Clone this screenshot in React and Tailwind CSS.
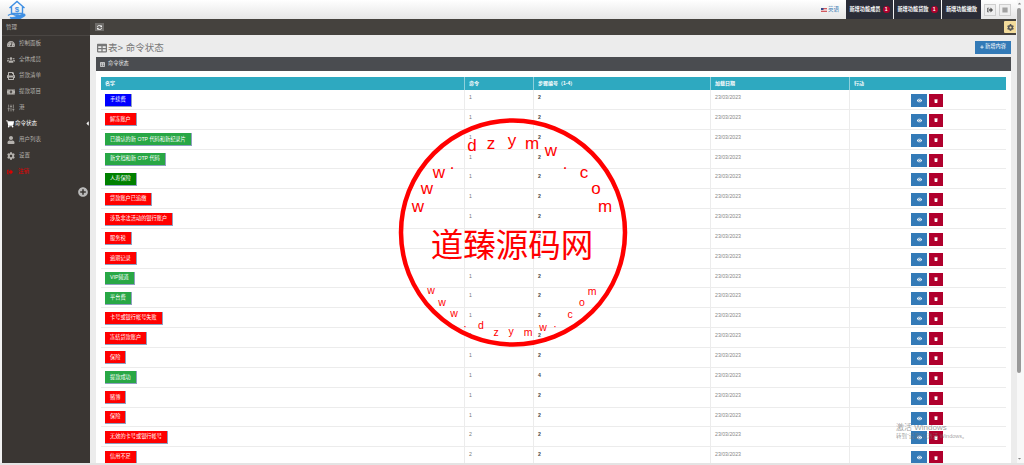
import React from "react";
import { FaTachometerAlt, FaUsers, FaPrint, FaMoneyBillAlt, FaShoppingCart, FaUser, FaCog, FaSignOutAlt, FaSyncAlt, FaTable, FaEye, FaTrash, FaBars, FaPlus, FaPlusCircle, FaCaretLeft, FaCaretUp, FaCaretDown } from "react-icons/fa";
import { SlidersVertical } from "lucide-react";

const R = "bg-[#ff0000]", G = "bg-[#28a745]", B = "bg-[#0000ff]", D = "bg-[#008000]";
const rows = [
  ["手续费", B, 1, 2], ["解冻账户", R, 1, 2], ["已确认的新 OTP 代码和新纪录片", G, 1, 2], ["新文档和新 OTP 代码", G, 1, 2],
  ["人寿保险", D, 1, 2], ["贷款账户已追缴", R, 1, 2], ["涉及非法活动的银行账户", R, 1, 2], ["服务税", R, 1, 2],
  ["逾期记录", R, 1, 2], ["VIP频道", G, 1, 2], ["平台费", G, 1, 2], ["卡号或银行帐号失败", R, 1, 2],
  ["冻结贷款账户", R, 1, 2], ["保险", R, 1, 2], ["提款成功", G, 1, 4], ["赌博", R, 1, 2],
  ["保险", R, 1, 2], ["无效的卡号或银行帐号", R, 2, 2], ["信用不足", R, 2, 2],
];
const menu = [
  [FaTachometerAlt, "控制面板"], [FaUsers, "全体成员"], [FaPrint, "贷款清单"], [FaMoneyBillAlt, "提款项目"],
  [SlidersVertical, "港"], [FaShoppingCart, "命令状态", true], [FaUser, "用户列表"], [FaCog, "设置"],
];
const ringLarge = [["w",418,212],["w",427,194],["w",439,178],["·",452,173],["d",472,151],["z",491,149],["y",512,146],["m",532,149],["w",551,156],["·",565,173],["c",584,178],["o",596,194],["m",605,212]];
const ringSmall = [["w",431,294],["w",442,306],["w",454,317],["·",465,330],["d",481,329],["z",496,336],["y",511,335],["m",528,336],["w",543,331],["·",555,330],["c",570,318],["o",582,306],["m",592,295]];

function Logo() {
  return (
    <svg viewBox="0 0 20 20" className="w-[20px] h-[20px]" fill="none" stroke="#3f8fe3" strokeWidth="1.4">
      <path d="M2.5 8 10 1.5 17.500 8M4.500 6.500V13.500H15.500V6.500" />
      <path d="M1 15.500c3-2.500 5-1.500 7-.5h3c1 0 1 1.500 0 1.500H8.500" />
      <path d="M11.500 16l5-1.800c1.300-.3 1.800 1 .8 1.600L12 19H6l-3-1.500" fill="#3f8fe3" />
      <text x="10" y="11.500" textAnchor="middle" fontSize="8" fontWeight="700" fill="#3f8fe3" stroke="none" fontFamily="Liberation Sans, sans-serif">$</text>
    </svg>
  );
}

function TopTab({ label, badge, w }) {
  return (
    <div className={`h-full ${w} bg-[#2b2d38] flex items-center justify-center gap-[2px] text-white text-[5.200px] font-bold`}>
      <span>{label}</span>
      {badge && <span className="w-[7px] h-[7px] rounded-full bg-[#b0002d] flex items-center justify-center text-[5px]">1</span>}
    </div>
  );
}

function Stamp() {
  return (
    <svg className="absolute left-[390px] top-[110px] w-[250px] h-[250px]" viewBox="390 110 250 250" fontFamily="Liberation Sans, sans-serif" fill="#ff0000">
      <circle cx="513" cy="232.500" r="112" fill="none" stroke="#ff0000" strokeWidth="4.500" />
      {ringLarge.map(([t, x, y], i) => <text key={i} x={x} y={y} fontSize="17" textAnchor="middle">{t}</text>)}
      {ringSmall.map(([t, x, y], i) => <text key={i} x={x} y={y} fontSize="10.500" textAnchor="middle">{t}</text>)}
      <text x="512" y="257" fontSize="32.500" textAnchor="middle" fontFamily="Noto Sans CJK SC, sans-serif">道臻源码网</text>
    </svg>
  );
}

export default function App() {
  return (
    <div className="relative w-[1024px] h-[465px] overflow-hidden bg-[#ececec] flex flex-col text-[5.200px] leading-none" style={{ fontFamily: '"Liberation Sans", "Noto Sans CJK SC", sans-serif' }}>
      <header className="h-[19px] shrink-0 bg-gradient-to-b from-[#ffffff] to-[#e6e6e6] flex items-center">
        <div className="pl-[7px]"><Logo /></div>
        <div className="ml-auto flex items-center h-full">
          <div className="flex items-center gap-[1px] mr-[7px] text-[#3c7db5] text-[5.500px]">
            <svg viewBox="0 0 6 4" className="w-[6px] h-[4px]"><rect width="6" height="4" fill="#d05a60" /><rect y="1" width="6" height=".6" fill="#fff" /><rect y="2.400" width="6" height=".6" fill="#fff" /><rect width="2.500" height="2" fill="#34488c" /></svg>
            <span>英语</span>
          </div>
          <div className="h-full flex gap-[1px]">
            <TopTab label="新增功能成员" badge w="w-[47px]" />
            <TopTab label="新增功能贷款" badge w="w-[47px]" />
            <TopTab label="新增功能撤款" w="w-[39px]" />
          </div>
          <div className="flex gap-[3px] ml-[3px] mr-[13px]">
            <div className="w-[12px] h-[12px] bg-[#efefef] border border-[#cfcfcf] flex items-center justify-center text-[#555]"><FaSignOutAlt size={6} /></div>
            <div className="w-[12px] h-[12px] bg-[#efefef] border border-[#cfcfcf] flex items-center justify-center text-[#555]"><FaBars size={6} /></div>
          </div>
        </div>
      </header>
      <div className="flex-1 flex min-h-0">
        <aside className="w-[90px] shrink-0 pl-[2px] bg-[#f1f1f1]">
          <div className="h-full bg-[#3a3633] text-[#b5b2ae]">
            <div className="h-[17px] flex items-center pl-[4px] pt-[2px] border-b border-[#4a4643] text-[5.500px]">管理</div>
            <nav className="flex flex-col">
              {menu.map(([Icon, label, active]) => (
                <div key={label} className={`relative h-[16px] flex items-center ${active ? "gap-[1px] pl-[4px] text-white" : "gap-[4px] pl-[5px]"} text-[5.500px]`}>
                  <Icon size={8} className="shrink-0" />
                  <span>{label}</span>
                  {active && <FaCaretLeft size={7} className="absolute right-[-1px] top-[4px] text-[#f1f1f1]" />}
                </div>
              ))}
              <div className="h-[16px] flex items-center gap-[5px] pl-[5px] text-[5.500px] text-[#e00000]">
                <FaSignOutAlt size={6} />
                <span>注销</span>
              </div>
            </nav>
            <div className="flex justify-end pr-[2px] pt-[7px]">
              <FaPlusCircle size={10} className="text-[#b9b9b9]" />
            </div>
          </div>
        </aside>
        <main className="flex-1 min-w-0 flex flex-col">
          <div className="h-[16px] shrink-0 bg-[#45423e] flex items-center pl-[5px] justify-between mr-[8px]">
            <div className="w-[9px] h-[8px] bg-[#6e6c69] flex items-center justify-center text-white"><FaSyncAlt size={5} /></div>
          </div>
          <div className="pl-[6px] pr-[13px]">
            <div className="flex items-center justify-between h-[22px]">
              <div className="flex items-center pl-[1px] pt-[4px] text-[#777] text-[9.500px] gap-[1px]">
                <FaTable size={10} />
                <span>表&gt; 命令状态</span>
              </div>
              <div className="w-[36px] h-[13px] mt-[2px] bg-[#337ab7] flex items-center justify-center gap-[1px] text-white text-[5.200px]"><FaPlus size={4} /><span>新增内容</span></div>
            </div>
            <section className="bg-white">
              <div className="h-[14px] bg-[#4a4c50] flex items-center gap-[3px] pl-[4px] text-[#e6e6e6] text-[5.200px]">
                <FaTable size={5} />
                <span>命令状态</span>
              </div>
              <div className="px-[5px] pt-[6px]">
                <div className="grid grid-cols-[363px_69px_177px_139px_155px] h-[13px] items-center bg-[#2ea9c0] text-white font-bold text-[5px]">
                  <div className="pl-[4px]">名字</div>
                  <div className="pl-[4px] h-full flex items-center border-l border-[#8fd0dc]">命令</div>
                  <div className="pl-[4px] h-full flex items-center border-l border-[#8fd0dc]">步骤编号（1-4）</div>
                  <div className="pl-[4px] h-full flex items-center border-l border-[#8fd0dc]">加载日期</div>
                  <div className="pl-[4px] h-full flex items-center border-l border-[#8fd0dc]">行动</div>
                </div>
                {rows.map(([name, color, cmd, step], i) => (
                  <div key={i} className="grid grid-cols-[363px_69px_177px_139px_155px] h-[19.850px] border-b border-[#ececec] text-[5.200px]">
                    <div className="pl-[4px] pt-[3.500px]">
                      <span className={`inline-flex items-center h-[13px] px-[5px] text-white border-r border-b border-[#8f9fc0] ${color}`}>{name}</span>
                    </div>
                    <div className="pl-[4px] pt-[5px] border-l border-[#ececec] text-[#777]">{cmd}</div>
                    <div className="pl-[4px] pt-[5px] border-l border-[#ececec] text-[#444] font-bold">{step}</div>
                    <div className="pl-[4px] pt-[5px] border-l border-[#ececec] text-[#888]">23/03/2023</div>
                    <div className="border-l border-[#ececec] flex justify-center gap-[2px] pt-[4px]">
                      <div className="w-[16px] h-[13px] bg-[#337ab7] flex items-center justify-center text-white"><FaEye size={5} /></div>
                      <div className="w-[14px] h-[13px] bg-[#b0002d] flex items-center justify-center text-white"><FaTrash size={4} /></div>
                    </div>
                  </div>
                ))}
              </div>
            </section>
          </div>
        </main>
      </div>
      <Stamp />
      <div className="absolute left-[1004px] top-[21px] w-[12px] h-[12px] bg-[#f3dc9b] flex items-center justify-center text-[#555] rounded-l-[1px]"><FaCog size={7} /></div>
      <div className="absolute right-0 top-0 bottom-[2px] w-[7px] bg-[#f8f8f8]">
        <div className="absolute left-[0px] top-[8px] w-[4px] h-[365px] bg-[#999999] rounded-[2px]" />
        <FaCaretUp size={5} className="absolute left-0 top-[1px] text-[#888]" />
        <FaCaretDown size={5} className="absolute left-0 bottom-[2px] text-[#888]" />
      </div>
      <div className="absolute left-0 right-0 bottom-0 h-[2px] bg-[#e4e4e4]" />
      <div className="absolute left-[896px] top-[424px] text-[#777]/70">
        <div className="text-[8px]">激活 Windows</div>
        <div className="text-[5.500px] mt-[2px]">转到“设置”以激活 Windows。</div>
      </div>
    </div>
  );
}
